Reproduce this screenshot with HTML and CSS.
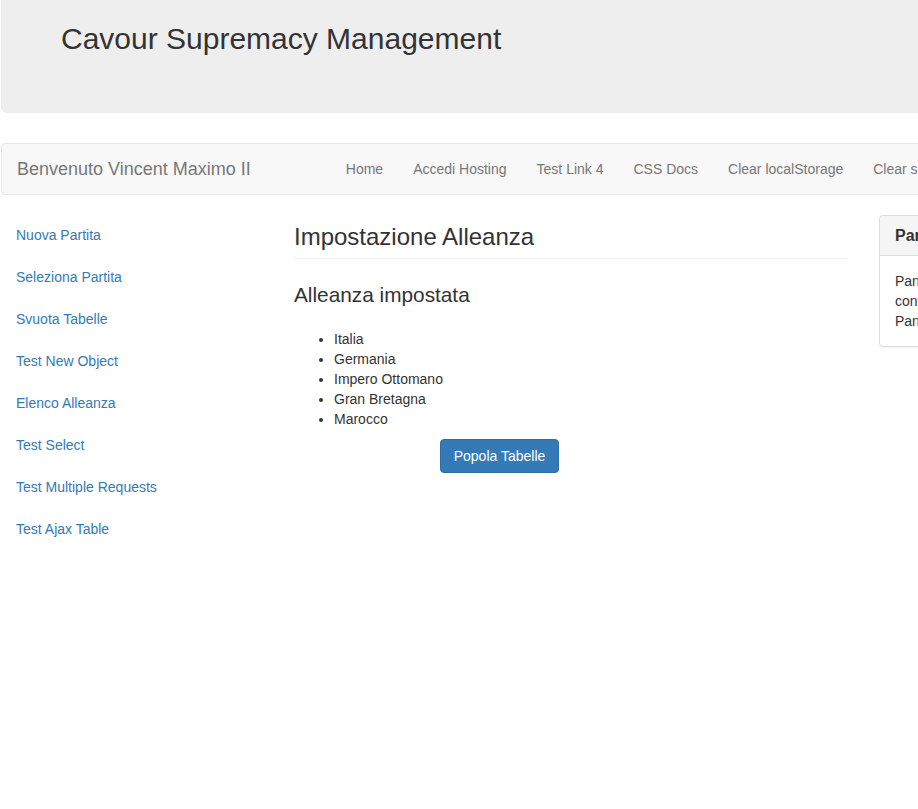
FILE: index.html
```html
<!DOCTYPE html>
<html lang="it">
<head>
<meta charset="utf-8">
<title>Cavour Supremacy Management</title>
<link rel="stylesheet" href="styles.css">
</head>
<body>
<div class="page">
  <div class="jumbotron">
    <h1 class="jumbo-title">Cavour Supremacy Management</h1>
  </div>
  <nav class="navbar">
    <span class="brand">Benvenuto Vincent Maximo II</span>
    <ul class="nav-links">
      <li><a href="#">Home</a></li>
      <li><a href="#">Accedi Hosting</a></li>
      <li><a href="#">Test Link 4</a></li>
      <li><a href="#">CSS Docs</a></li>
      <li><a href="#">Clear localStorage</a></li>
      <li><a href="#">Clear sessionStorage</a></li>
    </ul>
  </nav>
  <div class="row">
    <aside class="sidebar">
      <ul class="side-nav">
        <li><a href="#">Nuova Partita</a></li>
        <li><a href="#">Seleziona Partita</a></li>
        <li><a href="#">Svuota Tabelle</a></li>
        <li><a href="#">Test New Object</a></li>
        <li><a href="#">Elenco Alleanza</a></li>
        <li><a href="#">Test Select</a></li>
        <li><a href="#">Test Multiple Requests</a></li>
        <li><a href="#">Test Ajax Table</a></li>
      </ul>
    </aside>
    <main class="main">
      <div class="page-header">
        <h1 class="main-title">Impostazione Alleanza</h1>
      </div>
      <h3 class="sub-title">Alleanza impostata</h3>
      <ul class="nations">
        <li>Italia</li>
        <li>Germania</li>
        <li>Impero Ottomano</li>
        <li>Gran Bretagna</li>
        <li>Marocco</li>
      </ul>
      <div class="actions">
        <button class="btn-primary" type="button">Popola Tabelle</button>
      </div>
    </main>
    <section class="side-right">
      <div class="panel">
        <div class="panel-heading">Pannello informativo</div>
        <div class="panel-body">Pannello laterale<br>contenuto di esempio<br>Pannello fine</div>
      </div>
    </section>
  </div>
</div>
</body>
</html>
```

FILE: styles.css
```css
html, body {
  margin: 0;
  padding: 0;
  overflow: hidden;
  background: #fff;
}
body {
  font-family: "Liberation Sans", Arial, sans-serif;
  font-size: 14px;
  line-height: 20px;
  color: #333;
}
.page {
  width: 1250px;
  padding-left: 1px;
}
.jumbotron {
  background: #eeeeee;
  height: 113px;
  box-sizing: border-box;
  padding: 22px 60px 0;
  border-radius: 0 0 0 6px;
  margin-bottom: 30px;
}
.jumbo-title {
  margin: 0;
  font-size: 30px;
  line-height: 33px;
  font-weight: 400;
  color: #333;
}
.navbar {
  display: flex;
  align-items: center;
  background: #f8f8f8;
  border: 1px solid #e7e7e7;
  border-radius: 4px 0 0 4px;
  height: 50px;
  margin-bottom: 20px;
}
.brand {
  padding: 15px;
  font-size: 18px;
  line-height: 20px;
  color: #777;
}
.nav-links {
  list-style: none;
  margin: 0 0 0 65px;
  padding: 0;
  display: flex;
}
.nav-links a {
  display: block;
  padding: 15px;
  color: #777;
  text-decoration: none;
}
.row {
  display: flex;
  align-items: flex-start;
}
.sidebar {
  width: 278px;
  flex: none;
}
.side-nav {
  list-style: none;
  margin: 0;
  padding: 0;
  display: flex;
  flex-direction: column;
  gap: 2px;
}
.side-nav a {
  display: block;
  padding: 10px 15px;
  color: #337ab7;
  text-decoration: none;
}
.main {
  width: 554px;
  flex: none;
  padding: 0 16px 0 15px;
}
.page-header {
  margin-top: 9px;
  padding-bottom: 8px;
  border-bottom: 1px solid #eee;
}
.main-title {
  margin: 0;
  font-size: 24px;
  line-height: 26px;
  font-weight: 400;
}
.sub-title {
  margin: 24px 0 0;
  font-size: 20.8px;
  line-height: 23px;
  font-weight: 400;
}
.nations {
  margin: 23px 0 10px;
  padding-left: 40px;
}
.actions {
  padding-left: 146px;
}
.btn-primary {
  font-family: inherit;
  font-size: 14px;
  line-height: 20px;
  padding: 6px 12px;
  color: #fff;
  background: #337ab7;
  border: 1px solid #2e6da4;
  border-radius: 4px;
  width: 119px;
}
.side-right {
  padding-left: 15px;
  flex: none;
  width: 300px;
}
.panel {
  border: 1px solid #ddd;
  border-radius: 4px;
  box-shadow: 0 1px 1px rgba(0,0,0,.05);
}
.panel-heading {
  background: #f5f5f5;
  border-bottom: 1px solid #ddd;
  padding: 10px 15px;
  font-size: 16px;
  font-weight: 700;
  line-height: 19px;
  border-radius: 3px 3px 0 0;
}
.panel-body {
  padding: 15px;
}
```
